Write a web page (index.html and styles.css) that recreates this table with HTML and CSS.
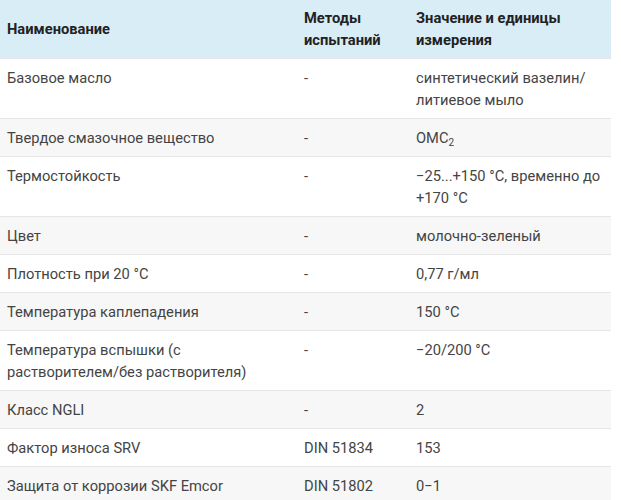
FILE: index.html
```html
<!DOCTYPE html>
<html lang="ru">
<head>
<meta charset="utf-8">
<link rel="stylesheet" href="styles.css">
</head>
<body>
<table class="spec">
  <colgroup>
    <col class="c-name">
    <col class="c-method">
    <col class="c-value">
  </colgroup>
  <thead>
    <tr>
      <th>Наименование</th>
      <th>Методы испытаний</th>
      <th>Значение и единицы измерения</th>
    </tr>
  </thead>
  <tbody>
    <tr><td>Базовое масло</td><td>-</td><td>синтетический вазелин/литиевое мыло</td></tr>
    <tr><td>Твердое смазочное вещество</td><td>-</td><td>OMC<sub>2</sub></td></tr>
    <tr><td>Термостойкость</td><td>-</td><td>−25...+150 °C, временно до +170 °C</td></tr>
    <tr><td>Цвет</td><td>-</td><td>молочно-зеленый</td></tr>
    <tr><td>Плотность при 20 °C</td><td>-</td><td>0,77 г/мл</td></tr>
    <tr><td>Температура каплепадения</td><td>-</td><td>150 °C</td></tr>
    <tr><td>Температура вспышки (с растворителем/без растворителя)</td><td>-</td><td>−20/200 °C</td></tr>
    <tr><td>Класс NGLI</td><td>-</td><td>2</td></tr>
    <tr><td>Фактор износа SRV</td><td>DIN 51834</td><td>153</td></tr>
    <tr><td>Защита от коррозии SKF Emcor</td><td>DIN 51802</td><td>0−1</td></tr>
  </tbody>
</table>
</body>
</html>
```
FILE: styles.css
```css
html, body {
  margin: 0;
  padding: 0;
  background: #ffffff;
}
body {
  font-family: Roboto, "Liberation Sans", sans-serif;
  font-size: 14.7px;
  color: #444444;
}
.spec {
  width: 611px;
  border-collapse: collapse;
  table-layout: fixed;
}
.c-name { width: 297px; }
.c-method { width: 112px; }
.c-value { width: 202px; }
.spec th {
  background: #d9edf7;
  color: #222222;
  font-weight: 700;
  text-align: left;
  vertical-align: middle;
  line-height: 22px;
  padding: 7px 7px;
}
.spec td {
  vertical-align: top;
  line-height: 22px;
  padding: 8px 7px 7px;
  border-top: 1px solid #e6e6e6;
}
.spec tbody tr:nth-child(even) td {
  background: #f7f7f7;
}
.spec sub {
  font-size: 10px;
  line-height: 0;
  vertical-align: -3px;
}
```
